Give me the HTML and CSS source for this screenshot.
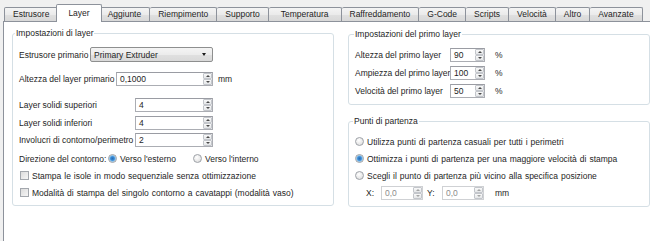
FILE: index.html
```html
<!DOCTYPE html>
<html lang="it">
<head>
<meta charset="utf-8">
<title>Layer</title>
<link rel="stylesheet" href="styles.css">
</head>
<body>
<div class="window">
  <div class="tabs">
    <div class="tab">Estrusore</div>
    <div class="tab active">Layer</div>
    <div class="tab">Aggiunte</div>
    <div class="tab">Riempimento</div>
    <div class="tab">Supporto</div>
    <div class="tab tab-wide">Temperatura</div>
    <div class="tab">Raffreddamento</div>
    <div class="tab">G-Code</div>
    <div class="tab">Scripts</div>
    <div class="tab">Velocità</div>
    <div class="tab">Altro</div>
    <div class="tab">Avanzate</div>
  </div>
  <div class="pane">
    <fieldset class="group group-left">
      <legend>Impostazioni di layer</legend>
      <div class="row">
        <span class="lbl w-extr">Estrusore primario</span>
        <div class="combo"><span class="combo-text">Primary Extruder</span><span class="caret"></span></div>
      </div>
      <div class="row mt7">
        <span class="lbl w-alt">Altezza del layer primario</span>
        <div class="spin w-long"><span class="val">0,1000</span><span class="arrows"><span class="btn up"></span><span class="btn down"></span></span></div>
        <span class="unit">mm</span>
      </div>
      <div class="row mt9">
        <span class="lbl w-solid">Layer solidi superiori</span>
        <div class="spin w-mid"><span class="val">4</span><span class="arrows"><span class="btn up"></span><span class="btn down"></span></span></div>
      </div>
      <div class="row mt1">
        <span class="lbl w-solid">Layer solidi inferiori</span>
        <div class="spin w-mid"><span class="val">4</span><span class="arrows"><span class="btn up"></span><span class="btn down"></span></span></div>
      </div>
      <div class="row">
        <span class="lbl w-solid">Involucri di contorno/perimetro</span>
        <div class="spin w-mid"><span class="val">2</span><span class="arrows"><span class="btn up"></span><span class="btn down"></span></span></div>
      </div>
      <div class="row mt2">
        <span class="lbl w-dir">Direzione del contorno:</span>
        <span class="radio checked"></span><span class="opt w-ext">Verso l'esterno</span>
        <span class="radio"></span><span class="opt">Verso l'interno</span>
      </div>
      <div class="row">
        <span class="check"></span><span class="opt long">Stampa le isole in modo sequenziale senza ottimizzazione</span>
      </div>
      <div class="row">
        <span class="check"></span><span class="opt long">Modalità di stampa del singolo contorno a cavatappi (modalità vaso)</span>
      </div>
    </fieldset>
    <div class="col-right">
      <fieldset class="group group-first">
        <legend>Impostazioni del primo layer</legend>
        <div class="row r18">
          <span class="lbl w-first">Altezza del primo layer</span>
          <div class="spin w-short"><span class="val">90</span><span class="arrows"><span class="btn up"></span><span class="btn down"></span></span></div>
          <span class="unit pct">%</span>
        </div>
        <div class="row r18">
          <span class="lbl w-first">Ampiezza del primo layer</span>
          <div class="spin w-short"><span class="val">100</span><span class="arrows"><span class="btn up"></span><span class="btn down"></span></span></div>
          <span class="unit pct">%</span>
        </div>
        <div class="row r18">
          <span class="lbl w-first">Velocità del primo layer</span>
          <div class="spin w-short"><span class="val">50</span><span class="arrows"><span class="btn up"></span><span class="btn down"></span></span></div>
          <span class="unit pct">%</span>
        </div>
      </fieldset>
      <fieldset class="group group-start">
        <legend>Punti di partenza</legend>
        <div class="row">
          <span class="radio"></span><span class="opt long">Utilizza punti di partenza casuali per tutti i perimetri</span>
        </div>
        <div class="row">
          <span class="radio checked"></span><span class="opt long">Ottimizza i punti di partenza per una maggiore velocità di stampa</span>
        </div>
        <div class="row">
          <span class="radio"></span><span class="opt long">Scegli il punto di partenza più vicino alla specifica posizione</span>
        </div>
        <div class="row pos">
          <span class="lbl w-axis">X:</span>
          <div class="spin w-pos disabled"><span class="val">0,0</span><span class="arrows"><span class="btn up"></span><span class="btn down"></span></span></div>
          <span class="lbl w-axis y-lbl">Y:</span>
          <div class="spin w-pos disabled"><span class="val">0,0</span><span class="arrows"><span class="btn up"></span><span class="btn down"></span></span></div>
          <span class="unit mm2">mm</span>
        </div>
      </fieldset>
    </div>
  </div>
</div>
</body>
</html>
```
FILE: styles.css
```css
* { box-sizing: border-box; }

html, body {
  margin: 0;
  padding: 0;
  width: 650px;
  height: 241px;
  overflow: hidden;
  background: #f0f0f0;
}

body {
  font-family: "Liberation Sans", Arial, sans-serif;
  font-size: 8.5px;
  color: #1e1e1e;
}

.window {
  display: flex;
  flex-direction: column;
  height: 241px;
}

/* ---------- tabs ---------- */
.tabs {
  display: flex;
  align-items: flex-end;
  height: 21px;
  padding-left: 4px;
  flex: none;
}

.tab {
  position: relative;
  height: 14px;
  padding: 0 8px;
  line-height: 13px;
  text-align: center;
  white-space: nowrap;
  border: 1px solid #8d929b;
  border-bottom: none;
  border-left-width: 0;
  background: linear-gradient(#f4f4f4, #ebebeb 50%, #e0e0e0 51%, #d8d8d8);
  border-radius: 2px 2px 0 0;
}

.tab:first-child { border-left-width: 1px; }

.tab-wide { padding: 0 12px; }

.tab.active {
  height: 18px;
  line-height: 17px;
  margin: 0 -2px -1px -2px;
  padding: 0 11px;
  border-left-width: 1px;
  background: #fff;
  z-index: 1;
}

/* ---------- pane ---------- */
.pane {
  flex: 1;
  display: flex;
  align-items: flex-start;
  gap: 14px;
  margin-left: 3px;
  padding-left: 8px;
  border-top: 1px solid #8d929b;
  border-left: 1px solid #8d929b;
  background: #fff;
}

.group {
  margin: 0;
  border: 1px solid #d5dfe5;
  border-radius: 3px;
  min-width: 0;
}

.group legend {
  padding: 0 1px;
  line-height: 11px;
  white-space: nowrap;
}

.group-left {
  width: 329px;
  margin-top: 6px;
  padding: 7px 6px 4px 6px;
}

.group-left legend { margin-left: -4px; }

.col-right {
  display: flex;
  flex-direction: column;
  flex: none;
  width: 302px;
}

.group-first {
  margin-top: 7px;
  padding: 6px 6px 4px 6px;
}

.group-start {
  margin-top: 11px;
  padding: 6px 5px 5px 5px;
}

.group-first legend,
.group-start legend { margin-left: -1px; }

/* ---------- rows ---------- */
.row {
  display: flex;
  align-items: center;
  height: 17px;
  white-space: nowrap;
}

.r18 { height: 18px; }
.mt1 { margin-top: 1px; }
.mt2 { margin-top: 2px; }
.mt7 { margin-top: 7px; }
.mt9 { margin-top: 9px; }

.lbl { flex: none; }
.w-extr { width: 71px; }
.w-alt { width: 97px; }
.w-solid { width: 116px; }
.w-dir { width: 89px; }
.w-first { width: 95px; }
.w-axis { width: 15px; }
.y-lbl { margin-left: 4px; }
.pos { padding-left: 12px; }

.long { word-spacing: 0.6px; }

/* ---------- combo ---------- */
.combo {
  display: flex;
  align-items: center;
  width: 123px;
  height: 15px;
  padding: 0 4px 0 3px;
  border: 1px solid #8e8f8f;
  border-radius: 2px;
  background: linear-gradient(#f4f4f4, #ececec 50%, #e0e0e0 51%, #d9d9d9);
}

.combo-text { flex: 1; }

.caret {
  width: 0;
  height: 0;
  margin-right: 2px;
  border-left: 2.5px solid transparent;
  border-right: 2.5px solid transparent;
  border-top: 3px solid #1a1a1a;
}

/* ---------- spin boxes ---------- */
.spin {
  display: flex;
  flex: none;
  height: 14px;
  border: 1px solid #abadb3;
  border-top-color: #9a9ca3;
  background: #fff;
}

.w-long { width: 97px; }
.w-mid { width: 78px; }
.w-short { width: 35px; }
.w-pos { width: 42px; }

.spin .val {
  flex: 1;
  padding-left: 3px;
  line-height: 12px;
}

.arrows {
  display: flex;
  flex-direction: column;
  width: 9px;
}

.btn {
  flex: 1;
  display: flex;
  align-items: center;
  justify-content: center;
  border: 1px solid #c3c6cb;
  border-radius: 1px;
  background: linear-gradient(#f9f9f9, #e4e6e8);
}

.btn::after {
  content: "";
  width: 0;
  height: 0;
  border-left: 2px solid transparent;
  border-right: 2px solid transparent;
}

.up::after { border-bottom: 2px solid #4a4a4a; }
.down::after { border-top: 2px solid #4a4a4a; }

.spin.disabled {
  border-color: #cfd1d4;
  color: #8c8c8c;
}

.spin.disabled .btn::after { opacity: 0.45; }

.unit { margin-left: 5px; }
.pct { margin-left: 10px; }
.mm2 { margin-left: 11px; }

/* ---------- radio / check ---------- */
.radio {
  flex: none;
  width: 9px;
  height: 9px;
  margin: 0 3px 0 0;
  border: 1px solid #9ea2a8;
  border-radius: 50%;
  background: radial-gradient(circle at 40% 35%, #ffffff, #e3e3e3 70%, #d3d3d3);
}

.radio.checked {
  background: radial-gradient(circle, #2a6fb3 0, #3a8ad6 1.8px, #8fc7ee 3px, #e8e8e8 3.6px, #e0e0e0);
}

.w-ext { width: 73px; }

.group-start .radio { margin-left: 1px; margin-right: 3px; }

.check {
  flex: none;
  width: 9px;
  height: 9px;
  margin: 0 3px 0 1px;
  border: 1px solid #a3a7ad;
  background: linear-gradient(135deg, #dcdcdc, #f6f6f6);
}
```
